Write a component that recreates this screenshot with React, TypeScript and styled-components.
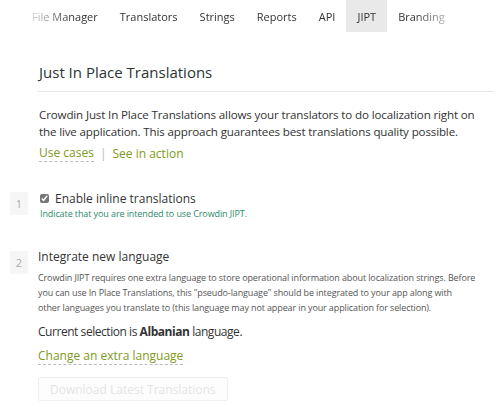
import styled, { createGlobalStyle } from 'styled-components';

const GlobalStyle = createGlobalStyle`
  body {
    margin: 0;
    background: #fff;
    font-family: 'Open Sans', 'Liberation Sans', sans-serif;
    color: #333;
  }
`;

const Page = styled.div`
  width: 498px;
  height: 407px;
  overflow: hidden;
`;

const TabStrip = styled.div`
  display: flex;
  height: 32px;
  padding-left: 21px;
  background: #fff;
  box-shadow: 0 1px 2px rgba(0, 0, 0, 0.12);
  -webkit-mask-image: linear-gradient(to right, transparent 22px, #000 72px, #000 415px, transparent 462px);
  mask-image: linear-gradient(to right, transparent 22px, #000 72px, #000 415px, transparent 462px);
`;

const Tab = styled.div<{ $active?: boolean }>`
  display: flex;
  align-items: center;
  padding: 0 11px;
  font-size: 11px;
  color: #333;
  background: ${(p) => (p.$active ? '#e9e9e9' : 'transparent')};
`;

const Content = styled.div`
  padding: 0 4px 0 38px;
`;

const Heading = styled.h2`
  margin: 30px 0 0;
  padding: 0 0 9px 1px;
  font-size: 15px;
  font-weight: 400;
  color: #2b3535;
  border-bottom: 1px solid #e6e6e6;
`;

const Intro = styled.p`
  max-width: 445px;
  margin: 14px 0 0 1px;
  font-size: 11.6px;
  letter-spacing: -0.15px;
  line-height: 17px;
  color: #333;
`;

const LinkRow = styled.div`
  display: flex;
  align-items: center;
  gap: 6px;
  margin: 5px 0 0 1px;
  font-size: 12px;
`;

const GreenLink = styled.a<{ $dashed?: boolean }>`
  color: #7d9a21;
  text-decoration: none;
  border-bottom: ${(p) => (p.$dashed ? '1px dashed #bbb' : 'none')};
  line-height: 16px;
`;

const Sep = styled.span`
  color: #bbb;
`;

const Step = styled.div<{ $top: number }>`
  display: flex;
  align-items: flex-start;
  margin: ${(p) => p.$top}px 0 0 -28px;
`;

const StepNum = styled.div`
  width: 18px;
  height: 23px;
  flex: none;
  display: flex;
  align-items: center;
  justify-content: center;
  margin: 2px 10px 0 0;
  background: #f6f6f6;
  color: #aaa;
  font-size: 11px;
`;

const StepBody = styled.div`
  flex: 1;
`;

const CheckLabel = styled.label`
  display: flex;
  align-items: center;
  gap: 6px;
  height: 16px;
  font-size: 12px;
  color: #333;
  margin-left: 2px;
`;

const Check = styled.input`
  width: 9px;
  height: 9px;
  margin: 0;
  accent-color: #777;
`;

const Hint = styled.div`
  margin-top: 1px;
  margin-left: 2px;
  font-size: 9px;
  letter-spacing: -0.1px;
  color: #2a8a6d;
`;

const StepTitle = styled.div`
  font-size: 12px;
  line-height: 16px;
  color: #333;
`;

const Desc = styled.p`
  max-width: 446px;
  margin: 5px 0 0;
  font-size: 9px;
  letter-spacing: -0.12px;
  line-height: 15px;
  color: #555;
`;

const Selection = styled.div`
  margin-top: 8px;
  font-size: 12px;
  letter-spacing: -0.45px;
  color: #333;
  b {
    font-weight: 700;
  }
`;

const ChangeRow = styled.div`
  margin-top: 7px;
  font-size: 12px;
`;

const DisabledButton = styled.button`
  margin-top: 13px;
  padding: 0 11px;
  height: 24px;
  border: 1px solid #f0f0f0;
  border-radius: 2px;
  background: #fdfdfd;
  color: #e4e4e4;
  font-family: inherit;
  font-size: 12px;
`;

export default function App() {
  const tabs = ['File Manager', 'Translators', 'Strings', 'Reports', 'API', 'JIPT', 'Branding'];
  return (
    <Page>
      <GlobalStyle />
      <TabStrip>
        {tabs.map((t) => (
          <Tab key={t} $active={t === 'JIPT'}>
            {t}
          </Tab>
        ))}
      </TabStrip>
      <Content>
        <Heading>Just In Place Translations</Heading>
        <Intro>
          Crowdin Just In Place Translations allows your translators to do localization right on the live
          application. This approach guarantees best translations quality possible.
        </Intro>
        <LinkRow>
          <GreenLink $dashed>Use cases</GreenLink>
          <Sep>|</Sep>
          <GreenLink>See in action</GreenLink>
        </LinkRow>
        <Step $top={28}>
          <StepNum>1</StepNum>
          <StepBody>
            <CheckLabel>
              <Check type="checkbox" defaultChecked />
              Enable inline translations
            </CheckLabel>
            <Hint>Indicate that you are intended to use Crowdin JIPT.</Hint>
          </StepBody>
        </Step>
        <Step $top={29}>
          <StepNum>2</StepNum>
          <StepBody>
            <StepTitle>Integrate new language</StepTitle>
            <Desc>
              Crowdin JIPT requires one extra language to store operational information about localization
              strings. Before you can use In Place Translations, this "pseudo-language" should be integrated to
              your app along with other&nbsp;languages you translate to (this language may not appear in your
              application for selection).
            </Desc>
            <Selection>
              Current selection is <b>Albanian</b> language.
            </Selection>
            <ChangeRow>
              <GreenLink $dashed>Change an extra language</GreenLink>
            </ChangeRow>
            <DisabledButton disabled>Download Latest Translations</DisabledButton>
          </StepBody>
        </Step>
      </Content>
    </Page>
  );
}
